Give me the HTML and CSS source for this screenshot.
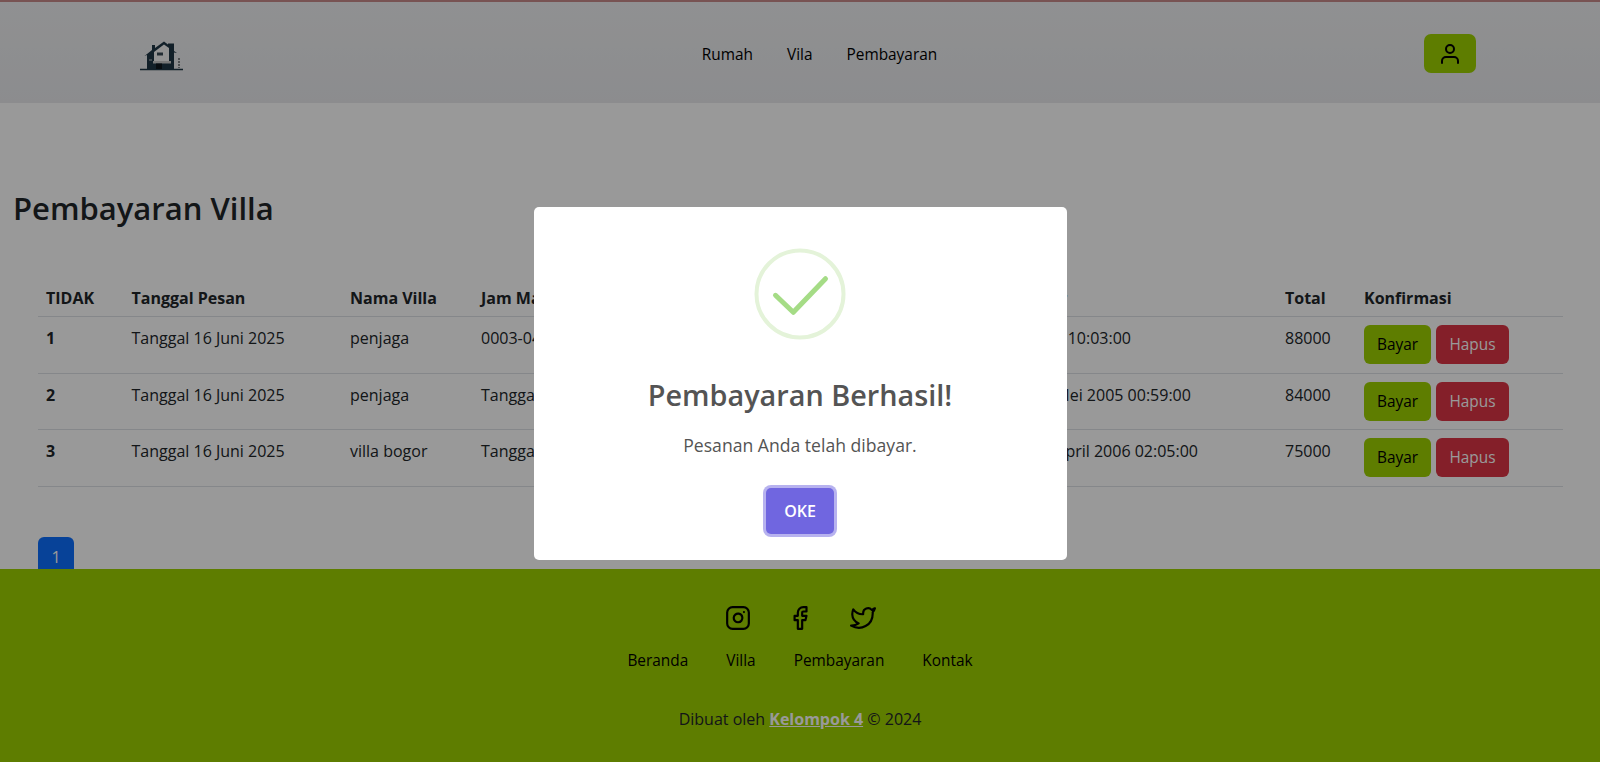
FILE: index.html
```html
<!DOCTYPE html>
<html lang="en">
<head>
    <meta charset="UTF-8">
    <meta name="viewport" content="width=device-width, initial-scale=1.0">
    <title>Pembayaran Villa</title>
    <link rel="stylesheet" href="styles.css">
</head>
<body>

    <div class="page">
        <header class="navbar">
            <a class="logo" href="#">
                <svg width="46" height="32" viewBox="0 0 46 32">
                    <path d="M1 29.500h43" stroke="#1f3645" stroke-width="1.600"/>
                    <path d="M8 29V15l-2.500 1L13 10V5h3v3l9-6.500 4 3V3.500h6V11l3 2-3-.5V29z" fill="#1f3645"/>
                    <path d="M15 12l10-7.500L30 8v14H15z" fill="#f5f5f5"/>
                    <path d="M18 12.500h6v3h-6z" fill="#3a4a55"/>
                    <path d="M14 21h18v2.500H14z" fill="#c8c8c8"/>
                    <path d="M17 23.500h6V29h-6z" fill="#0d151b"/>
                    <path d="M10 19h3v2h-3z" fill="#6b7880"/>
                    <path d="M40 18v10" stroke="#55595c" stroke-width="1.400" stroke-dasharray="2 1"/>
                </svg>
            </a>
            <nav class="nav-links">
                <a href="#">Rumah</a>
                <a href="#">Vila</a>
                <a href="#">Pembayaran</a>
            </nav>
            <button class="user-btn">
                <svg width="24" height="24" viewBox="0 0 24 24" fill="none" stroke="#000" stroke-width="2" stroke-linecap="round" stroke-linejoin="round">
                    <path d="M20 21v-2a4 4 0 0 0-4-4H8a4 4 0 0 0-4 4v2"/>
                    <circle cx="12" cy="7" r="4"/>
                </svg>
            </button>
        </header>

        <main class="content">
            <h1>Pembayaran Villa</h1>
            <div class="table-wrap">
                <table>
                    <thead>
                        <tr>
                            <th class="col-no">TIDAK</th>
                            <th class="col-date">Tanggal Pesan</th>
                            <th class="col-name">Nama Villa</th>
                            <th class="col-in">Jam Masuk</th>
                            <th class="col-out">Jam Keluar</th>
                            <th class="col-total">Total</th>
                            <th>Konfirmasi</th>
                        </tr>
                    </thead>
                    <tbody>
                        <tr>
                            <th>1</th>
                            <td>Tanggal 16 Juni 2025</td>
                            <td>penjaga</td>
                            <td>0003-04-05 10:03:00</td>
                            <td>0003-04-05 10:03:00</td>
                            <td>88000</td>
                            <td class="actions"><div class="action-btns"><button class="btn btn-pay">Bayar</button><button class="btn btn-del">Hapus</button></div></td>
                        </tr>
                        <tr>
                            <th>2</th>
                            <td>Tanggal 16 Juni 2025</td>
                            <td>penjaga</td>
                            <td>Tanggal 4 Mei 2005 00:59:00</td>
                            <td>Tanggal 4 Mei 2005 00:59:00</td>
                            <td>84000</td>
                            <td class="actions"><div class="action-btns"><button class="btn btn-pay">Bayar</button><button class="btn btn-del">Hapus</button></div></td>
                        </tr>
                        <tr>
                            <th>3</th>
                            <td>Tanggal 16 Juni 2025</td>
                            <td>villa bogor</td>
                            <td>Tanggal 5 April 2006 02:05:00</td>
                            <td>Tanggal 5 April 2006 02:05:00</td>
                            <td>75000</td>
                            <td class="actions"><div class="action-btns"><button class="btn btn-pay">Bayar</button><button class="btn btn-del">Hapus</button></div></td>
                        </tr>
                    </tbody>
                </table>
            </div>
            <a class="page-num" href="#">1</a>
        </main>

        <footer class="footer">
            <div class="social">
                <svg width="26" height="26" viewBox="0 0 24 24" fill="none" stroke="#000" stroke-width="2" stroke-linecap="round" stroke-linejoin="round">
                    <rect x="2" y="2" width="20" height="20" rx="5" ry="5"/>
                    <path d="M16 11.370A4 4 0 1 1 12.630 8 4 4 0 0 1 16 11.370z"/>
                    <path d="M17.500 6.500h.010"/>
                </svg>
                <svg width="26" height="26" viewBox="0 0 24 24" fill="none" stroke="#000" stroke-width="2" stroke-linecap="round" stroke-linejoin="round">
                    <path d="M18 2h-3a5 5 0 0 0-5 5v3H7v4h3v8h4v-8h3l1-4h-4V7a1 1 0 0 1 1-1h3z"/>
                </svg>
                <svg width="26" height="26" viewBox="0 0 24 24" fill="none" stroke="#000" stroke-width="2" stroke-linecap="round" stroke-linejoin="round">
                    <path d="M23 3a10.900 10.900 0 0 1-3 1.530 4.480 4.480 0 0 0-7.860 3v1A10.660 10.660 0 0 1 3 4s-4 9 5 13a11.640 11.640 0 0 1-7 2c9 5 20 0 20-11.500a4.500 4.500 0 0 0-.080-.830A7.720 7.720 0 0 0 23 3z"/>
                </svg>
            </div>
            <nav class="footer-links">
                <a href="#">Beranda</a>
                <a href="#">Villa</a>
                <a href="#">Pembayaran</a>
                <a href="#">Kontak</a>
            </nav>
            <p class="credit">Dibuat oleh <a href="#">Kelompok 4</a> © 2024</p>
        </footer>
    </div>

    <!-- success popup -->
    <div class="overlay">
        <div class="modal">
            <div class="check-icon">
                <svg width="92" height="92" viewBox="0 0 92 92" fill="none">
                    <circle cx="46" cy="46" r="43.500" stroke="#e4f3d9" stroke-width="4"/>
                    <path d="M21.500 47.300L39.300 64.300 71.500 30.700" stroke="#a5dc86" stroke-width="5" stroke-linecap="round" stroke-linejoin="round"/>
                </svg>
            </div>
            <h2>Pembayaran Berhasil!</h2>
            <p>Pesanan Anda telah dibayar.</p>
            <button class="ok-btn">OKE</button>
        </div>
    </div>

</body>
</html>
```

FILE: styles.css
```css
* {
    box-sizing: border-box;
}
body {
    margin: 0;
    font-family: "Open Sans", "Noto Sans", sans-serif;
    font-size: 16px;
    line-height: 24px;
    color: #212529;
    background-color: #fff;
    overflow: hidden;
}
a {
    color: inherit;
    text-decoration: none;
}
.page {
    height: 100vh;
    display: flex;
    flex-direction: column;
}

/* navbar */
.navbar {
    height: 103px;
    flex-shrink: 0;
    display: flex;
    align-items: center;
    justify-content: space-between;
    padding: 2px 124px 0 139px;
    border-top: 2px solid #c98a8a;
    background: linear-gradient(#f0f1f3, #e9eaed);
}
.logo {
    display: flex;
    margin-top: 4px;
}
.nav-links {
    display: flex;
    gap: 34px;
    margin: 2px 0 0 30px;
    color: #000;
    font-size: 15.400px;
}
.user-btn {
    width: 52px;
    height: 39px;
    display: flex;
    align-items: center;
    justify-content: center;
    border: none;
    border-radius: 7px;
    background-color: #9dd000;
    padding: 0;
}

/* main content */
.content {
    flex: 1;
    min-height: 0;
    overflow: hidden;
    padding: 85px 13px 0;
}
h1 {
    margin: 0 0 49px;
    font-size: 31px;
    font-weight: 600;
    line-height: 40px;
}
.table-wrap {
    padding: 0 24px 0 25px;
}
table {
    width: 100%;
    border-collapse: collapse;
    table-layout: fixed;
}
th,
td {
    text-align: left;
    vertical-align: top;
    padding: 9px 8px 8px;
    border-bottom: 1px solid #dee2e6;
    font-weight: 400;
    white-space: nowrap;
    overflow: hidden;
}
th {
    font-weight: 700;
}
thead th {
    padding: 9px 8px 6px;
}
tbody td,
tbody th {
    height: 56.500px;
}
.col-no { width: 85.500px; }
.col-date { width: 218.500px; }
.col-name { width: 131px; }
.col-in { width: 499px; }
.col-out { width: 305px; }
.col-total { width: 79px; }
td.actions {
    padding-top: 8px;
}
.action-btns {
    display: flex;
    gap: 5px;
}
.btn {
    height: 39px;
    padding: 1px 0 0;
    border: none;
    border-radius: 6px;
    font: inherit;
    font-size: 15.400px;
}
.btn-pay {
    background-color: #9dd000;
    color: #000;
    width: 67px;
}
.btn-del {
    background-color: #dc3545;
    color: #fff;
    width: 73px;
}
.page-num {
    display: block;
    width: 36px;
    height: 40px;
    margin: 50px 0 0 25px;
    padding-top: 8px;
    text-align: center;
    color: #fff;
    background-color: #0d6efd;
    border-radius: 6px;
}

/* footer */
.footer {
    height: 193px;
    flex-shrink: 0;
    display: flex;
    flex-direction: column;
    align-items: center;
    background-color: #9dd000;
    color: #000;
    padding-top: 36px;
}
.social {
    display: flex;
    gap: 36.500px;
}
.footer-links {
    display: flex;
    gap: 38px;
    margin-top: 18px;
    font-size: 15.400px;
}
.credit {
    margin: 34px 0 0;
    color: #212529;
}
.credit a {
    color: #fff;
    font-weight: 700;
    text-decoration: underline;
}

/* popup */
.overlay {
    position: fixed;
    inset: 0;
    background-color: rgba(0, 0, 0, 0.4);
    display: flex;
    align-items: flex-start;
    justify-content: center;
}
.modal {
    width: 533px;
    height: 353px;
    margin-top: 207px;
    padding-top: 41px;
    background-color: #fff;
    border-radius: 5px;
    display: flex;
    flex-direction: column;
    align-items: center;
    color: #545454;
}
.check-icon {
    display: flex;
}
.modal h2 {
    margin: 35px 0 0;
    font-size: 28.800px;
    line-height: 40px;
    font-weight: 600;
}
.modal p {
    margin: 18px 0 0;
    font-size: 17.600px;
    line-height: 24px;
}
.ok-btn {
    margin-top: 31px;
    width: 68px;
    height: 46px;
    border: none;
    border-radius: 5px;
    background-color: #7066e0;
    box-shadow: 0 0 0 3px rgba(112, 102, 224, 0.5);
    color: #fff;
    font: inherit;
    font-size: 16px;
    font-weight: 600;
}
```
